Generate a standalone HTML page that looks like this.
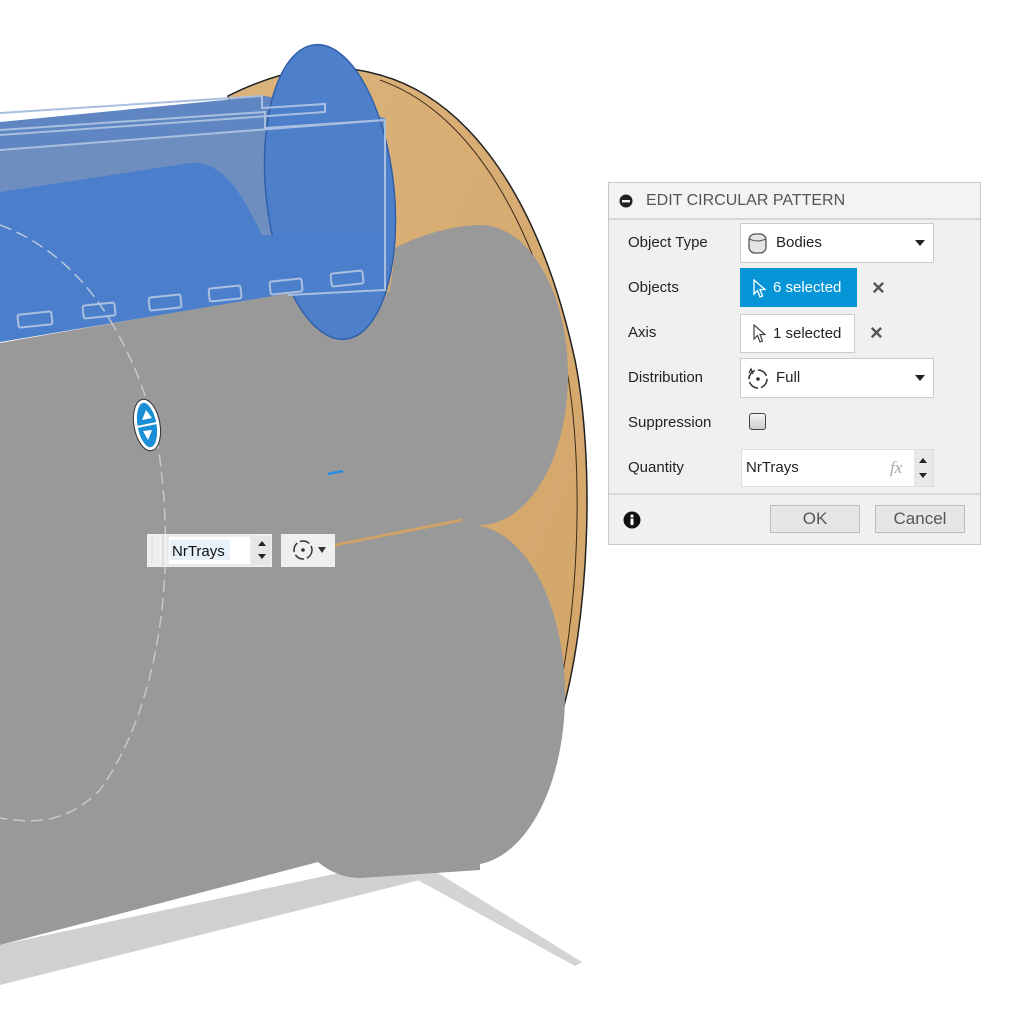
<!DOCTYPE html>
<html><head><meta charset="utf-8"><style>
body{margin:0;width:1026px;height:1025px;background:#fff;overflow:hidden;position:relative;font-family:"Liberation Sans",Arial,sans-serif}
svg.scene{position:absolute;left:0;top:0}
.dlg{position:absolute;left:608px;top:182px;width:373px;height:363px;background:#f0f0f0;border:1px solid #c8c8c8;box-sizing:border-box}
.hdr{position:absolute;left:0;top:0;right:0;height:35px;border-bottom:2px solid #d6d6d6;background:#f3f3f3}
.hdr span{position:absolute;left:37px;top:9px;font-size:16px;color:#555}
.lbl{position:absolute;left:19px;font-size:15px;color:#222}
.box{position:absolute;background:#fff;border:1px solid #ccc;box-sizing:border-box;font-size:15px;color:#222}
.x{position:absolute;font-size:22px;color:#555;font-weight:bold}
.btn{position:absolute;top:322px;height:28px;background:#e6e6e6;border:1px solid #bdbdbd;box-sizing:border-box;font-size:17px;color:#555;text-align:center;line-height:26px}
.caret{position:absolute;right:8px;top:16px;width:0;height:0;border-left:5px solid transparent;border-right:5px solid transparent;border-top:6px solid #222}
</style></head><body>
<svg class="scene" width="1026" height="1025" viewBox="0 0 1026 1025">
<defs>
<linearGradient id="wood" x1="0" y1="0" x2="1" y2="1"><stop offset="0" stop-color="#dbb37c"/><stop offset="1" stop-color="#d2a468"/></linearGradient>
</defs>
<!-- shadow -->
<polygon points="0,945 400,860 420,880 0,985" fill="#d0d0d0"/>
<polygon points="390,865 430,868 582,962 575,966" fill="#d4d4d4"/>
<!-- wood disc -->
<path d="M228,96 C280,70 330,60 380,75 C470,100 540,200 575,360 C595,460 590,620 560,720 C530,810 480,860 420,866 L330,868 L300,300 Z" fill="url(#wood)" stroke="#222" stroke-width="1.5"/>
<path d="M380,80 C465,110 530,210 565,360 C585,460 580,620 552,720 C525,805 475,855 415,862" fill="none" stroke="#3a2a18" stroke-width="1"/>
<!-- main gray body -->
<path d="M0,343 L290,292 L390,292 L480,225 L480,870 L360,878 C340,878 325,868 318,862 L0,945 Z" fill="#999"/>
<!-- blue body -->
<polygon points="0,122 265,96 385,118 385,290 290,293 0,342" fill="#5f86c2"/>
<polygon points="0,150 385,120 385,236 0,260" fill="#6f8fbf" opacity="0.9"/>
<path d="M0,192 L190,163 C225,160 245,200 262,235 L385,236 L385,290 L290,293 L0,342 Z" fill="#4c7fcb"/>
<!-- blue disc -->
<ellipse cx="330" cy="192" rx="64" ry="148" transform="rotate(-6 330 192)" fill="#4d7fcb" stroke="#2f5fa8" stroke-width="1.5"/>
<path d="M268,235 L385,236 L385,290 L290,293 Z" fill="#4c7fcb"/>
<!-- rails -->
<g fill="none" stroke="#a9bfe0" stroke-width="2">
<path d="M0,113 L262,96 L262,108 L325,104 L325,112 L0,135"/>
<path d="M0,130 L265,112 L265,128 L385,120 L385,290 L288,295"/>
<path d="M0,150 L385,120"/>
<rect x="18" y="313" width="34" height="13" rx="2" transform="rotate(-6 35 320)"/>
<rect x="83" y="304" width="32" height="13" rx="2" transform="rotate(-6 99 310)"/>
<rect x="149" y="296" width="32" height="13" rx="2" transform="rotate(-6 165 302)"/>
<rect x="209" y="287" width="32" height="13" rx="2" transform="rotate(-6 225 293)"/>
<rect x="270" y="280" width="32" height="13" rx="2" transform="rotate(-6 286 286)"/>
<rect x="331" y="272" width="32" height="13" rx="2" transform="rotate(-6 347 278)"/>
</g>
<!-- gray right cylinders -->
<g fill="#999">
<path d="M395,248 C420,235 450,226 480,225 L480,540 L372,540 L372,334 C385,315 392,290 395,248 Z"/>
<ellipse cx="480" cy="375" rx="88" ry="150"/>
<ellipse cx="470" cy="695" rx="95" ry="170"/>
</g>
<line x1="330" y1="546" x2="462" y2="520" stroke="#cfa26a" stroke-width="3"/>
<!-- dashed arc -->
<path d="M110,320 C140,370 155,420 160,460 C178,600 150,720 100,790 C70,820 40,825 0,818" fill="none" stroke="#c8c8c8" stroke-width="1.5" stroke-dasharray="12,6"/>
<path d="M0,225 C40,240 80,270 110,320" fill="none" stroke="#b8c8e0" stroke-width="1.5" stroke-dasharray="12,6"/>
<!-- handle -->
<ellipse cx="147" cy="425" rx="11" ry="24" transform="rotate(-10 147 425)" fill="#1a8fd6" stroke="#fff" stroke-width="3"/>
<ellipse cx="147" cy="425" rx="13" ry="26" transform="rotate(-10 147 425)" fill="none" stroke="#333" stroke-width="1"/>
<line x1="137" y1="427" x2="157" y2="423" stroke="#fff" stroke-width="2"/>
<polygon points="146,410 152,418 142,420" fill="#fff"/>
<polygon points="148,440 152,430 143,431" fill="#fff"/>
<line x1="328" y1="474" x2="343" y2="471" stroke="#2a8de0" stroke-width="2.5"/>
<!-- mini toolbar -->
<rect x="147" y="534" width="125" height="33" fill="#efefef"/>
<line x1="152" y1="537" x2="152" y2="564" stroke="#ccc" stroke-dasharray="2,2"/>
<line x1="163" y1="535" x2="163" y2="566" stroke="#ccc"/>
<rect x="168" y="536" width="83" height="29" fill="#fff" stroke="#ddd"/>
<rect x="170" y="540" width="60" height="20" fill="#e8f0f8"/>
<text x="172" y="556" font-family="Liberation Sans, sans-serif" font-size="15" fill="#111">NrTrays</text>
<rect x="252" y="536" width="19" height="29" fill="#e6e6e6"/>
<polygon points="258,546 262,541 266,546" fill="#222"/><polygon points="258,554 266,554 262,559" fill="#222"/>
<rect x="281" y="534" width="54" height="33" fill="#efefef"/>
<circle cx="303" cy="550" r="9" fill="none" stroke="#333" stroke-width="1.5" stroke-dasharray="10,3"/>
<circle cx="303" cy="550" r="1.8" fill="#333"/>
<polygon points="318,547 326,547 322,553" fill="#333"/>
</svg>

<div class="dlg">
 <div class="hdr"><svg style="position:absolute;left:10px;top:11px" width="14" height="14"><circle cx="7" cy="7" r="6.5" fill="#222"/><rect x="3" y="6" width="8" height="2.4" fill="#f3f3f3"/></svg><span>EDIT CIRCULAR PATTERN</span></div>
 <div class="lbl" style="top:51px">Object Type</div>
 <div class="box" style="left:131px;top:40px;width:194px;height:40px"><svg style="position:absolute;left:7px;top:9px" width="20" height="22"><rect x="1" y="1" width="17" height="19" rx="6" fill="#e4e4e4" stroke="#555" stroke-width="1.3"/><path d="M1.5,6 Q9.5,10 17.5,6" fill="none" stroke="#555" stroke-width="1"/></svg><span style="position:absolute;left:35px;top:10px">Bodies</span><div class="caret"></div></div>
 <div class="lbl" style="top:96px">Objects</div>
 <div class="box" style="left:131px;top:85px;width:117px;height:39px;background:#0696d7;border-color:#0696d7;color:#fff"><svg style="position:absolute;left:11px;top:10px" width="14" height="20"><path d="M2,1 L2,15 L5.5,11.5 L8,18 L10.5,17 L8,10.5 L13,10.5 Z" fill="#0696d7" stroke="#fff" stroke-width="1.3"/></svg><span style="position:absolute;left:32px;top:10px">6 selected</span></div>
 <div class="x" style="left:263px;top:92px">×</div>
 <div class="lbl" style="top:141px">Axis</div>
 <div class="box" style="left:131px;top:131px;width:115px;height:39px"><svg style="position:absolute;left:11px;top:9px" width="14" height="20"><path d="M2,1 L2,15 L5.5,11.5 L8,18 L10.5,17 L8,10.5 L13,10.5 Z" fill="#fff" stroke="#444" stroke-width="1.2"/></svg><span style="position:absolute;left:32px;top:10px">1 selected</span></div>
 <div class="x" style="left:261px;top:137px">×</div>
 <div class="lbl" style="top:186px">Distribution</div>
 <div class="box" style="left:131px;top:175px;width:194px;height:40px"><svg style="position:absolute;left:5px;top:8px" width="24" height="24"><circle cx="12" cy="12" r="9" fill="none" stroke="#333" stroke-width="1.5" stroke-dasharray="11,3"/><circle cx="12" cy="12" r="1.8" fill="#333"/><path d="M3,6 L5,2 L7,7" fill="none" stroke="#333" stroke-width="1.3"/></svg><span style="position:absolute;left:35px;top:10px">Full</span><div class="caret"></div></div>
 <div class="lbl" style="top:231px">Suppression</div>
 <div style="position:absolute;left:140px;top:230px;width:17px;height:17px;border:1.5px solid #444;border-radius:3px;background:linear-gradient(#f5f5f5,#ccc);box-sizing:border-box"></div>
 <div class="lbl" style="top:276px">Quantity</div>
 <div class="box" style="left:132px;top:266px;width:193px;height:38px;border-color:#ddd"><span style="position:absolute;left:4px;top:9px">NrTrays</span><span style="position:absolute;left:148px;top:8px;color:#aaa;font-style:italic;font-family:'Liberation Serif',serif;font-size:17px">fx</span><div style="position:absolute;right:0;top:0;width:19px;height:36px;background:#e8e8e8"><div style="position:absolute;left:5px;top:8px;border-left:4px solid transparent;border-right:4px solid transparent;border-bottom:5px solid #222"></div><div style="position:absolute;left:5px;top:23px;border-left:4px solid transparent;border-right:4px solid transparent;border-top:5px solid #222"></div></div></div>
 <div style="position:absolute;left:0;right:0;top:310px;height:2px;background:#d8d8d8"></div>
 <svg style="position:absolute;left:14px;top:328px" width="18" height="18"><circle cx="9" cy="9" r="8.5" fill="#111"/><rect x="7.5" y="7.5" width="3" height="6.5" fill="#fff"/><circle cx="9" cy="5" r="1.6" fill="#fff"/></svg>
 <div class="btn" style="left:161px;width:90px">OK</div>
 <div class="btn" style="left:266px;width:90px">Cancel</div>
</div>
</body></html>
